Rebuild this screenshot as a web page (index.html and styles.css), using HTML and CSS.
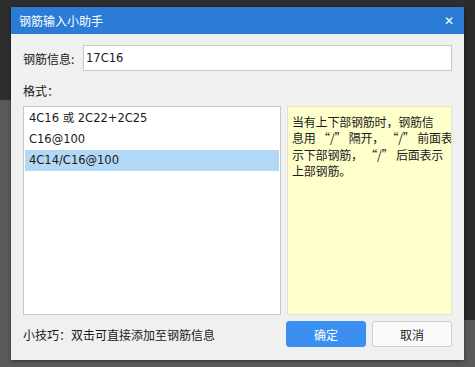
FILE: index.html
```html
<!DOCTYPE html>
<html lang="zh-CN">
<head>
<meta charset="utf-8">
<title>钢筋输入小助手</title>
<link rel="stylesheet" href="styles.css">
</head>
<body>
<div class="backdrop">
  <div class="dialog">
    <div class="titlebar">
      <span class="title">钢筋输入小助手</span>
      <span class="close">&#x2715;</span>
    </div>
    <div class="content">
      <div class="row-info">
        <label class="label">钢筋信息:</label>
        <div class="input">17C16</div>
      </div>
      <div class="format-label">格式：</div>
      <div class="panes">
        <div class="list">
          <div class="item">4C16 或 2C22+2C25</div>
          <div class="item">C16@100</div>
          <div class="item selected">4C14/C16@100</div>
        </div>
        <div class="note">当有上下部钢筋时，钢筋信<br>息用 “/” 隔开， “/” 前面表<br>示下部钢筋， “/” 后面表示<br>上部钢筋。</div>
      </div>
      <div class="footer">
        <div class="tip">小技巧：双击可直接添加至钢筋信息</div>
        <div class="buttons">
          <button class="btn primary">确定</button>
          <button class="btn">取消</button>
        </div>
      </div>
    </div>
  </div>
</div>
</body>
</html>
```

FILE: styles.css
```css
* { box-sizing: border-box; }
html, body { margin: 0; padding: 0; }
body {
  width: 475px;
  height: 367px;
  overflow: hidden;
  font-family: "Noto Sans CJK SC", "Liberation Sans", sans-serif;
  font-size: 12px;
  color: #1a1a1a;
  background:
    linear-gradient(to right, transparent 0, transparent 464px, #2b2b2b 464px, #2b2b2b 475px) top / 100% 320px no-repeat,
    linear-gradient(#2e2e2e, #2e2e2e) top / 100% 100px no-repeat,
    #5a5a5a;
}
.backdrop {
  padding: 7px 11px 0 11px;
}
.dialog {
  width: 453px;
  height: 353px;
  background: #f0f0f0;
  box-shadow: 0 1px 4px rgba(0,0,0,0.45);
  display: flex;
  flex-direction: column;
}
.titlebar {
  height: 27px;
  background: #2b7cd7;
  color: #fff;
  display: flex;
  align-items: center;
  justify-content: space-between;
  padding: 0 10px 0 8px;
}
.title { font-size: 12px; }
.close { font-size: 12px; font-weight: bold; font-family: "DejaVu Sans", sans-serif; }
.content {
  flex: 1;
  padding: 11px 12px 0 12px;
  display: flex;
  flex-direction: column;
}
.row-info {
  display: flex;
  align-items: center;
  gap: 5px;
}
.label { width: 55px; font-size: 12px; }
.input {
  flex: 1;
  height: 26px;
  background: #fff;
  border: 1px solid #c8c8c8;
  padding: 0 0 0 2px;
  display: flex;
  align-items: center;
  font-family: "DejaVu Sans", "Noto Sans CJK SC", sans-serif;
  font-size: 11.5px;
}
.format-label {
  margin-top: 12px;
  height: 16px;
  line-height: 16px;
}
.panes {
  margin-top: 7px;
  display: flex;
  gap: 6px;
  height: 209px;
}
.list {
  flex: 0 0 258px;
  width: 258px;
  background: #fff;
  border: 1px solid #c8c8c8;
  padding: 1px 1px;
}
.item {
  height: 21px;
  line-height: 21px;
  padding-left: 4px;
  font-family: "DejaVu Sans", "Noto Sans CJK SC", sans-serif;
  font-size: 11.5px;
}
.item.selected { background: #b3d8f5; }
.note {
  flex: 1 1 0;
  min-width: 0;
  overflow: hidden;
  background: #ffffcc;
  border: 1px solid #e4e4c8;
  padding: 7px 0 0 4px;
  line-height: 16.4px;
  white-space: nowrap;
  font-size: 12px;
  letter-spacing: -0.2px;
}
.footer {
  margin-top: 6px;
  display: flex;
  align-items: center;
  justify-content: space-between;
}
.tip { font-size: 12px; }
.buttons { display: flex; gap: 6px; }
.btn {
  width: 80px;
  height: 26px;
  border: 1px solid #d0d0d0;
  border-radius: 3px;
  background: #fafafa;
  font-family: "Noto Sans CJK SC", sans-serif;
  font-size: 12px;
  color: #222;
  padding: 0;
}
.btn.primary {
  background: #3b8ff0;
  border-color: #3b8ff0;
  color: #fff;
}
```
